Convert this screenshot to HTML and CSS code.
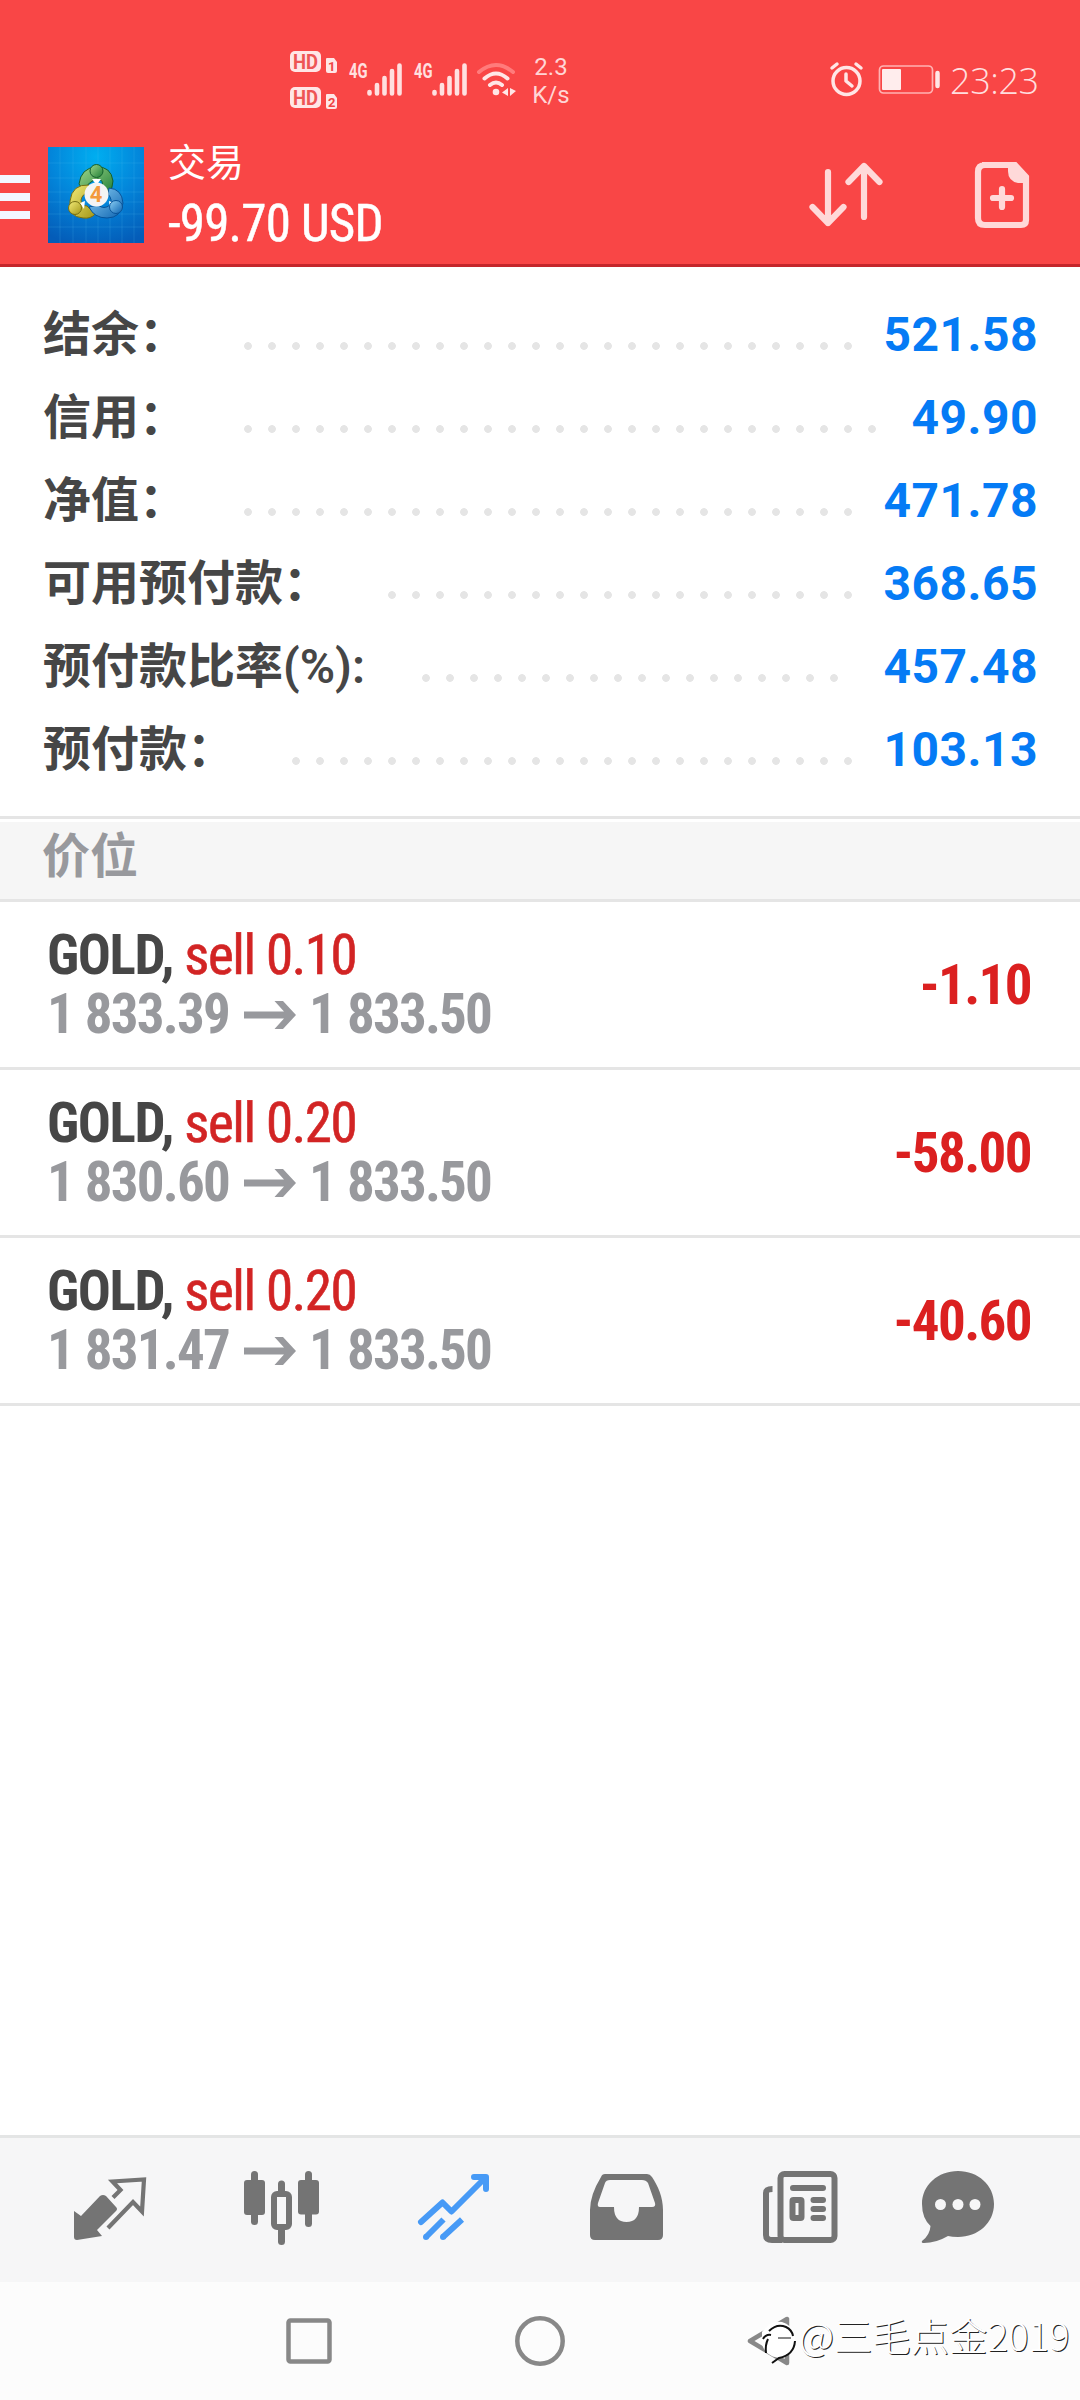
FILE: index.html
```
<!DOCTYPE html>
<html lang="zh-CN">
<head>
<meta charset="utf-8">
<title>交易</title>
<link rel="stylesheet" href="styles.css">
</head>
<body>
<div class="screen">
  <header class="top">
    <div class="status">
      <svg class="status-left" viewBox="280 40 240 80" width="240" height="80">
        <g fill="#ffe6e6">
          <rect x="290" y="51" width="31" height="21" rx="5"/>
          <rect x="290" y="87" width="31" height="21" rx="5"/>
          <path d="M326 59q0-1 1-1h7l3 4v9q0 2-2 2h-7q-2 0-2-2z"/>
          <path d="M326 95q0-1 1-1h7l3 4v9q0 2-2 2h-7q-2 0-2-2z"/>
        </g>
        <g class="hd"><text x="293" y="69" textLength="25" lengthAdjust="spacingAndGlyphs">HD</text><text x="293" y="105" textLength="25" lengthAdjust="spacingAndGlyphs">HD</text></g>
        <g class="sim"><text x="328" y="71">1</text><text x="328" y="107">2</text></g>
        <g class="gen"><text x="349" y="77.500" textLength="18.500" lengthAdjust="spacingAndGlyphs">4G</text><text x="414" y="77.500" textLength="18.500" lengthAdjust="spacingAndGlyphs">4G</text></g>
        <g stroke="#ffe0e0" stroke-width="4.600" stroke-linecap="round">
          <path d="M369.500 92v1.500M377 85v8.500M384.500 78v15.500M392 71v22.500M399.500 65.500v28M434.500 92v1.500M442 85v8.500M449.500 78v15.500M457 71v22.500M464.500 65.500v28"/>
        </g>
        <g fill="none" stroke="#ffe6e6" stroke-width="4" stroke-linecap="round">
          <path stroke="#ff7b7b" d="M479 72q17-14 34 0"/>
          <path d="M484.500 78.500q11.500-10 23 0M490 85q6-5 12 0"/>
        </g>
        <circle cx="496" cy="92" r="3.300" fill="#ffe6e6"/>
        <path fill="#ffe6e6" d="M508 88v8l-6-3.500zM510 88l6 3-6 5z"/>
      </svg>
      <div class="speed"><span>2.3</span><span>K/s</span></div>
      <svg class="status-right" viewBox="826 56 120 48" width="120" height="48">
        <g fill="none" stroke="#ffe6e6" stroke-linecap="round" stroke-linejoin="round">
          <circle cx="846.500" cy="81" r="13.500" stroke-width="3.500"/>
          <path stroke-width="3.500" d="M846 74v7l6 5M832 68l5-4M861 68l-5-4"/>
          <rect x="879.500" y="66" width="53" height="27" rx="4" stroke-width="1.700" stroke="#ffb3b3"/>
          <path stroke-width="4.500" d="M937.500 73v13"/>
        </g>
        <rect x="882" y="69" width="19" height="21" rx="1" fill="#ffeded"/>
      </svg>
      <div class="clock">23:23</div>
    </div>
    <div class="bar">
      <div class="menu"><i></i><i></i><i></i></div>
      <svg class="logo" viewBox="48 147 96 96" width="96" height="96">
        <defs>
          <radialGradient id="bg" cx=".5" cy=".1" r=".95"><stop offset="0" stop-color="#00aef0"/><stop offset=".5" stop-color="#0385da"/><stop offset="1" stop-color="#045cb8"/></radialGradient>
          <linearGradient id="g" x2="1" y2="1"><stop offset="0" stop-color="#9fd68a"/><stop offset="1" stop-color="#1e7d35"/></linearGradient>
          <linearGradient id="y" x2="1" y2="1"><stop offset="0" stop-color="#f4ec79"/><stop offset="1" stop-color="#a39617"/></linearGradient>
          <linearGradient id="b" x2="1" y2="1"><stop offset="0" stop-color="#8dd0f5"/><stop offset="1" stop-color="#0b62b0"/></linearGradient>
        </defs>
        <path fill="url(#bg)" d="M48 147h96v96H48z"/>
        <path stroke="#5cc3f2" stroke-opacity=".22" stroke-width=".8" fill="none" d="M60 147v96M73 147v96M86 147v96M98 147v96M110 147v96M122 147v96M134 147v96M48 163h96M48 178h96M48 192h96M48 202h96M48 214h96M48 227h96"/>
        <g stroke-width="1">
          <path fill="url(#g)" stroke="#155f2c" d="M79 184q2-16 17-17t17 14q0 7-5 14l-6-8q2-7-4-8-10 2-14 12z"/>
          <path fill="url(#y)" stroke="#776f12" d="M89 185q-17-1-19 16-2 16 13 17 8 1 12-4l-8-8q-6 0-6-6 1-6 8-8z"/>
          <path fill="url(#b)" stroke="#07539a" d="M109 188q13 1 14 15-2 15-16 15-13 0-18-11l9-2q6 5 12 0 3-5-2-11z"/>
          <path fill="#fff" d="M92 179h9l-3 4h-3zM80 203l5-2-1 8zM109 201l5 2-4 6z"/>
          <circle cx="96.500" cy="171" r="6.500" fill="url(#g)" stroke="#155f2c"/>
          <circle cx="75" cy="208" r="6.500" fill="url(#y)" stroke="#776f12"/>
          <circle cx="116" cy="207" r="6.500" fill="url(#b)" stroke="#07539a"/>
        </g>
        <circle cx="96.500" cy="194.500" r="12" fill="#f4f4f4"/>
        <text class="logo-num" x="96" y="202" text-anchor="middle">4</text>
      </svg>
      <div class="title">
        <span class="name">交易</span>
        <span class="total cond">-99.70 USD</span>
      </div>
      <svg class="actions" viewBox="800 150 240 90" width="240" height="90">
        <g fill="none" stroke="#ffd9d9" stroke-width="6.200" stroke-linecap="round" stroke-linejoin="round">
          <path d="M828 172v51M812.500 207l15.500 16 15.500-16M864 217v-51M848.500 182l15.500-16 15.500 16"/>
          <path d="M1002 189v18M993 198h18"/>
          <path stroke-linejoin="miter" d="M982 165h33l11 12v43q0 5-5 5h-36q-7 0-7-7v-46q0-7 7-7z"/>
        </g>
        <path fill="#ffd9d9" d="M1008 165h9l11 13v5h-10q-10-2-10-12z"/>
      </svg>
    </div>
  </header>

  <section class="summary">
    <div class="line"><b>结余：</b><i></i><strong>521.58</strong></div>
    <div class="line"><b>信用：</b><i></i><strong>49.90</strong></div>
    <div class="line"><b>净值：</b><i></i><strong>471.78</strong></div>
    <div class="line"><b>可用预付款：</b><i></i><strong>368.65</strong></div>
    <div class="line"><b>预付款比率<span class="ratio">(%):</span></b><i></i><strong>457.48</strong></div>
    <div class="line"><b>预付款：</b><i></i><strong>103.13</strong></div>
  </section>

  <h2 class="section">价位</h2>

  <main class="positions">
    <article class="position">
      <div>
        <p class="deal cond"><b>GOLD,</b> <span>sell 0.10</span></p>
        <p class="price cond"><span>1 833.39</span><svg viewBox="0 0 52 28" width="52" height="28"><path d="M0 10.500h40L30.500 0h8.500l13 14-13 14h-8.500L40 17.500H0z"/></svg><span>1 833.50</span></p>
      </div>
      <strong class="profit cond">-1.10</strong>
    </article>
    <article class="position">
      <div>
        <p class="deal cond"><b>GOLD,</b> <span>sell 0.20</span></p>
        <p class="price cond"><span>1 830.60</span><svg viewBox="0 0 52 28" width="52" height="28"><path d="M0 10.500h40L30.500 0h8.500l13 14-13 14h-8.500L40 17.500H0z"/></svg><span>1 833.50</span></p>
      </div>
      <strong class="profit cond">-58.00</strong>
    </article>
    <article class="position">
      <div>
        <p class="deal cond"><b>GOLD,</b> <span>sell 0.20</span></p>
        <p class="price cond"><span>1 831.47</span><svg viewBox="0 0 52 28" width="52" height="28"><path d="M0 10.500h40L30.500 0h8.500l13 14-13 14h-8.500L40 17.500H0z"/></svg><span>1 833.50</span></p>
      </div>
      <strong class="profit cond">-40.60</strong>
    </article>
  </main>

  <nav class="tabs">
    <svg viewBox="24 2138 172 144"><path fill="#747474" d="M74 2211l7 5 19-20q3-2 6 0l10 11q2 2 0 4l-19 19 5 6-25 4q-3 0-3-3z"/><path fill="none" stroke="#747474" stroke-width="4.200" d="M113 2197.500l7.500-7.500-8-8.500 31.500-2-2 32-9-9.500-25 26"/></svg>
    <svg viewBox="196 2138 172 144"><g fill="#747474"><rect x="244" y="2180" width="21" height="35" rx="3"/><rect x="298" y="2180" width="21" height="34.500" rx="3"/><rect x="251" y="2171" width="7" height="54" rx="3.500"/><rect x="305" y="2171" width="7" height="56" rx="3.500"/><rect x="278" y="2180.500" width="7" height="20" rx="3.500"/><rect x="278" y="2225" width="7" height="20" rx="3.500"/></g><rect x="274" y="2194" width="15" height="33" rx="3" fill="#f6f6f7" stroke="#747474" stroke-width="6"/></svg>
    <svg viewBox="368 2138 172 144"><path fill="none" stroke="#479af6" stroke-width="6" stroke-linecap="round" stroke-linejoin="round" d="M421 2222l21.500-19.500 9 9 34-34M474 2177h12v12"/><g fill="none" stroke="#479af6" stroke-width="6"><path d="M426 2237l17.500-17.500M443 2237l19-17.500"/></g><g fill="#479af6"><circle cx="426" cy="2237" r="3"/><circle cx="443" cy="2237" r="3"/></g></svg>
    <svg viewBox="540 2138 172 144"><path fill="#747474" fill-rule="evenodd" d="M605 2174h42q3 0 5 3c6 9 11 20 11 33v25q0 5-5 5h-63q-5 0-5-5v-25q0-15 11-33 1-3 4-3zM610 2180q-4 0-5 3l-7 20q-1 4 2 4h14q0 15 12.500 15t12.500-15h13q4 0 3-4l-7-20q-2-3-6-3z"/></svg>
    <svg viewBox="712 2138 172 144"><g fill="none" stroke="#747474" stroke-width="6"><rect x="780.500" y="2174" width="54" height="66" rx="4"/><path d="M772.500 2189q-6.500 0-6.500 4v42q0 5 6 5h10"/></g><g fill="none" stroke="#747474" stroke-width="6" stroke-linecap="round"><path d="M793 2188h30M813.500 2200h9.500M813.500 2209h9.500M813.500 2218h9.500"/></g><rect x="792.500" y="2200" width="9" height="18" rx="1" fill="none" stroke="#747474" stroke-width="6"/></svg>
    <svg viewBox="884 2138 172 144"><path fill="#747474" d="M958 2171c20 0 36 14 36 33s-16 33-36 33q-6 0-10-1-12 7-24 7-3 0-2-2 8-6 8.500-15-8.500-8-8.500-22c0-19 16-33 36-33z"/><g fill="#f6f6f7"><circle cx="940.500" cy="2204.500" r="5.500"/><circle cx="958" cy="2204.500" r="5.500"/><circle cx="975" cy="2204.500" r="5.500"/></g></svg>
  </nav>

  <footer class="system">
    <svg viewBox="0 2282 1080 118" width="1080" height="118">
      <g fill="none" stroke="#888" stroke-width="4.500" stroke-linejoin="round">
        <rect x="288.500" y="2320.500" width="41" height="41" rx="2"/>
        <circle cx="540" cy="2341" r="22.700"/>
        <path d="M750 2341l37-22v44z"/>
      </g>
      <path fill="#fff" d="M762 2332q8-12 20-10 13 4 13 18-2 14-16 18-14-2-17-14z"/>
      <path fill="none" stroke="#111" stroke-width="2" d="M769 2331q8-8 17-4 6 3 7 9M763 2339q3-5 8-4M768 2339q-3 6-2 14M795 2341q-1 14-16 17l-7 5"/>
      <path fill="none" stroke="#888" stroke-width="2" d="M778 2338h13"/>
    </svg>
    <div class="watermark">@三毛点金2019</div>
  </footer>
</div>
</body>
</html>
```
FILE: styles.css
```
* { box-sizing: border-box; }
body { margin: 0; background: #fff; font-family: Roboto, "Noto Sans CJK SC", sans-serif; }
p, h2 { margin: 0; }
svg { display: block; flex: none; }
.screen { width: 1080px; height: 2400px; display: flex; flex-direction: column; overflow: hidden; }
.cond { font-family: "Roboto Condensed", Roboto, "Noto Sans CJK SC", sans-serif; font-stretch: 75%; }

.top { height: 267px; background: #f94646; border-bottom: 3px solid #c4262b; color: #fff; }
.status { height: 128px; padding: 40px 30px 0 280px; display: flex; align-items: flex-start; }
.status-left { margin-right: 8px; }
.hd { font: 700 21px Roboto, sans-serif; fill: #ee5555; }
.sim { font: 700 13px Roboto, sans-serif; fill: #f04444; }
.gen { font: 700 20px Roboto, sans-serif; fill: #ffe0e0; }
.speed { width: 46px; flex: none; padding-top: 13px; display: flex; flex-direction: column; align-items: center; font-size: 24px; line-height: 28px; color: #ffd5d5; }
.status-right { margin: 16px 0 0 252px; }
.clock { margin: 16px 0 0 4px; font: 300 36px/50px "Open Sans", sans-serif; letter-spacing: -.4px; color: #ffdede; }
.bar { display: flex; }
.menu { width: 48px; padding-top: 47px; display: flex; flex-direction: column; gap: 10px; }
.menu i { width: 30px; height: 8px; background: #f3f6ff; }
.logo { margin-top: 19px; }
.logo-num { font: 700 22px Roboto, sans-serif; fill: #f39a3c; }
.title { margin-left: 24px; width: 632px; padding-top: 10px; display: flex; flex-direction: column; }
.name { font-size: 38px; line-height: 50px; }
.total { font-size: 51px; line-height: 72px; letter-spacing: -.8px; -webkit-text-stroke: .5px #fff; }
.actions { margin-top: 22px; }

.summary { height: 552px; padding: 27px 42px 0 43px; border-bottom: 3px solid #e5e5e5; }
.line { height: 83px; display: flex; align-items: flex-start; font-size: 48px; line-height: 81px; }
.line b { color: #464646; white-space: nowrap; }
.ratio { font-weight: 600; }
.line i { flex: 1; height: 8px; margin: 48px 31px 0 57px; background: radial-gradient(circle at 4px 4px, #e5e5e5 3.500px, transparent 4.200px) 0 0 / 24px 8px repeat-x; }
.line strong { color: #057bf5; letter-spacing: .5px; }

.section { height: 83px; padding-left: 42px; border-top: 3px solid #fff; border-bottom: 3px solid #e5e5e5; background: #f6f6f6; color: #98999d; font-size: 48px; line-height: 70px; }

.position { height: 168px; padding: 24px 49px 0 47px; border-bottom: 3px solid #e5e5e5; display: flex; justify-content: space-between; }
.deal { font-size: 55px; line-height: 59px; letter-spacing: -1.400px; color: #d22424; white-space: nowrap; }
.deal b { color: #464646; }
.deal span { -webkit-text-stroke: .6px #d22424; }
.price { display: flex; align-items: center; font-size: 55px; line-height: 59px; font-weight: 700; letter-spacing: -1.800px; word-spacing: 1px; color: #98999d; white-space: nowrap; }
.price svg { margin: 0 13px 0 15px; }
.price path { fill: #98999d; }
.profit { font-size: 55px; line-height: 119px; letter-spacing: -1.600px; color: #db2020; }

.tabs { height: 147px; margin-top: auto; padding-left: 24px; border-top: 3px solid #e4e5e5; background: #f6f6f7; display: flex; }
.tabs svg { width: 172px; height: 144px; }
.system { position: relative; height: 118px; flex: none; background: #fcfcfc; }
.watermark { position: absolute; left: 799px; top: 27px; font: 300 38.400px/50px "Noto Sans CJK SC", sans-serif; color: #fff; text-shadow: 1px 1px 0 #222; white-space: nowrap; }
```
